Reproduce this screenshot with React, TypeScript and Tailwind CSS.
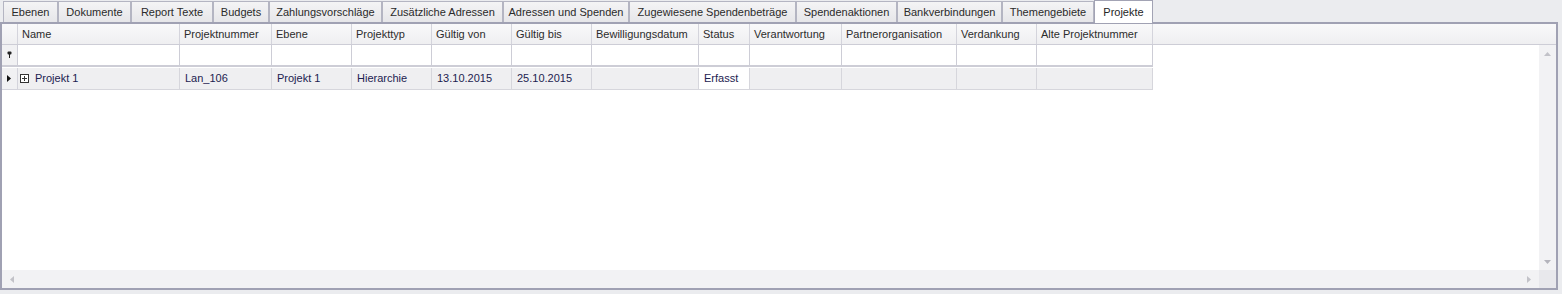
import React from 'react';

const tabs = [
  { label: 'Ebenen', w: 55 },
  { label: 'Dokumente', w: 73 },
  { label: 'Report Texte', w: 82 },
  { label: 'Budgets', w: 56 },
  { label: 'Zahlungsvorschläge', w: 113 },
  { label: 'Zusätzliche Adressen', w: 121 },
  { label: 'Adressen und Spenden', w: 126 },
  { label: 'Zugewiesene Spendenbeträge', w: 167 },
  { label: 'Spendenaktionen', w: 101 },
  { label: 'Bankverbindungen', w: 105 },
  { label: 'Themengebiete', w: 92 },
  { label: 'Projekte', w: 59, active: true },
];

const columns = [
  { label: 'Name', w: 162 },
  { label: 'Projektnummer', w: 92 },
  { label: 'Ebene', w: 80 },
  { label: 'Projekttyp', w: 80 },
  { label: 'Gültig von', w: 80 },
  { label: 'Gültig bis', w: 80 },
  { label: 'Bewilligungsdatum', w: 107 },
  { label: 'Status', w: 51 },
  { label: 'Verantwortung', w: 92 },
  { label: 'Partnerorganisation', w: 115 },
  { label: 'Verdankung', w: 80 },
  { label: 'Alte Projektnummer', w: 116 },
];

const row = ['Projekt 1', 'Lan_106', 'Projekt 1', 'Hierarchie', '13.10.2015', '25.10.2015', '', 'Erfasst', '', '', '', ''];

function PinIcon() {
  return (
    <svg width="5" height="8" viewBox="0 0 5 8">
      <rect x="0.5" y="0.5" width="4" height="3" rx="1" fill="#222" />
      <rect x="2" y="3" width="1" height="4" fill="#222" />
    </svg>
  );
}

function ExpandBox() {
  return (
    <svg width="9" height="9" viewBox="0 0 9 9" className="shrink-0">
      <rect x="0.5" y="0.5" width="8" height="8" fill="#fff" stroke="#333" />
      <rect x="2" y="4" width="5" height="1" fill="#333" />
      <rect x="4" y="2" width="1" height="5" fill="#333" />
    </svg>
  );
}

export default function App() {
  return (
    <div className="w-[1562px] h-[294px] bg-[#ebecef] text-[11px] leading-none text-[#262626] overflow-hidden" style={{ fontFamily: '"Liberation Sans", Arial, sans-serif' }}>
      <div className="flex items-end h-[22px] pl-[3px]">
        {tabs.map((t) =>
          t.active ? (
            <div key={t.label} style={{ width: t.w }} className="h-[23px] mb-[-1px] pt-[1px] relative z-10 bg-white border border-b-0 border-[#a2a3b4] flex items-center justify-center">
              {t.label}
            </div>
          ) : (
            <div key={t.label} style={{ width: t.w }} className="h-[21px] pt-[1px] bg-gradient-to-b from-[#f4f4f5] to-[#e6e6e9] border border-b-0 border-[#b4b5c2] flex items-center justify-center text-[#2a2a2a]">
              {t.label}
            </div>
          )
        )}
      </div>

      <div className="w-[1558px] h-[268px] border-2 border-[#a0a1b3] bg-white flex flex-col">
        {/* column headers */}
        <div className="h-[21px] flex bg-gradient-to-b from-[#f9f9fa] to-[#efeff1] border-b border-[#cdcdd6] shrink-0">
          <div className="w-[16px] border-r border-[#d4d4dc] shrink-0" />
          {columns.map((c) => (
            <div key={c.label} style={{ width: c.w }} className="shrink-0 border-r border-[#d4d4dc] flex items-center pl-[4px] text-[#2c2c2c]">
              {c.label}
            </div>
          ))}
          <div className="flex-1" />
        </div>

        <div className="flex flex-1 min-h-0">
          <div className="flex-1 flex flex-col">
            {/* auto filter row */}
            <div className="h-[22px] flex shrink-0">
              <div className="w-[16px] h-full bg-[#f1f1f3] border-r border-b-2 border-[#cdcdd6] flex items-center justify-center shrink-0">
                <PinIcon />
              </div>
              {columns.map((c) => (
                <div key={c.label} style={{ width: c.w }} className="shrink-0 h-full bg-white border-r border-b-2 border-[#cdcdd6]" />
              ))}
            </div>
            <div className="h-[1px] shrink-0" />
            {/* data row */}
            <div className="h-[22px] flex shrink-0">
              <div className="w-[16px] h-full bg-[#f1f1f3] border-r border-b border-[#d4d4dc] flex items-center pl-[5px] shrink-0">
                <svg width="4" height="7" viewBox="0 0 4 7">
                  <path d="M0 0 L4 3.5 L0 7 Z" fill="#111" />
                </svg>
              </div>
              {columns.map((c, i) => (
                <div
                  key={c.label}
                  style={{ width: c.w }}
                  className={
                    'shrink-0 h-full border-r border-b border-[#d6d6dc] flex items-center text-[#1c2250] ' +
                    (i === 7 ? 'bg-white ' : 'bg-[#efeff1] ') +
                    (i === 0 ? 'pl-[2px] gap-[6px]' : 'pl-[5px]')
                  }
                >
                  {i === 0 && <ExpandBox />}
                  {row[i]}
                </div>
              ))}
            </div>
          </div>
          {/* vertical scrollbar */}
          <div className="w-[17px] bg-[#f2f2f4] flex flex-col items-center justify-between pt-[7px] pb-[6px] shrink-0">
            <svg width="7" height="4" viewBox="0 0 7 4"><path d="M0 4 L3.5 0 L7 4 Z" fill="#c2c2c8" /></svg>
            <svg width="7" height="4" viewBox="0 0 7 4"><path d="M0 0 L3.5 4 L7 0 Z" fill="#b4b4bc" /></svg>
          </div>
        </div>

        {/* horizontal scrollbar */}
        <div className="h-[18px] flex shrink-0">
          <div className="flex-1 bg-[#f2f2f4] flex items-center justify-between pl-[8px] pr-[8px]">
            <svg width="4" height="7" viewBox="0 0 4 7"><path d="M4 0 L0 3.5 L4 7 Z" fill="#c2c2c8" /></svg>
            <svg width="4" height="7" viewBox="0 0 4 7"><path d="M0 0 L4 3.5 L0 7 Z" fill="#c2c2c8" /></svg>
          </div>
          <div className="w-[17px] bg-[#e8e8ec]" />
        </div>
      </div>
    </div>
  );
}
